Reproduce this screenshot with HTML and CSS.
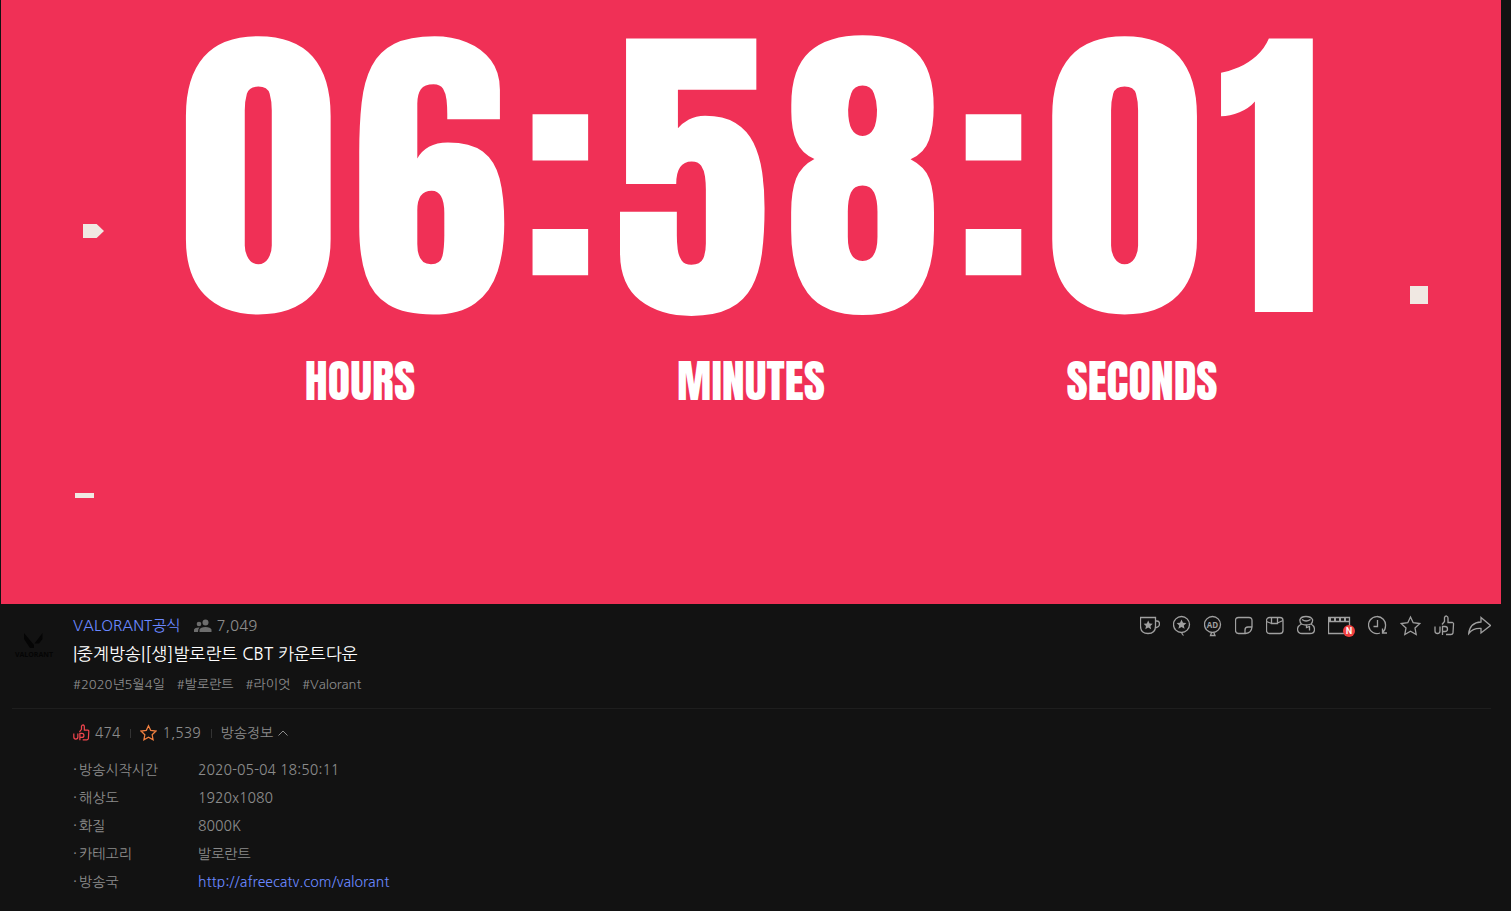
FILE: index.html
```html
<!DOCTYPE html>
<html lang="ko">
<head>
<meta charset="utf-8">
<title>VALORANT공식</title>
<link rel="stylesheet" href="styles.css">
</head>
<body>
<svg class="defs" aria-hidden="true">
  <symbol id="thumb" viewBox="0 0 21 22">
    <path d="M8 9.500L10.500 6.500V2.500Q11 1 12.500 1Q14 1.500 14 3V7.500H18.500Q20 8 19.500 9.500L19 18Q18.500 19.500 17 19.500H12"/>
    <path d="M1 11.500V16Q1 18.500 3.500 18.500T6 16V11.500M8.500 20V11.500H11Q13.500 11.500 13.500 14T11 16.500H8.500"/>
  </symbol>
  <symbol id="star" viewBox="0 0 21 22">
    <path d="M10.500 2L13.200 7.700L19.700 8.600L15 13.100L16.200 19.500L10.500 16.300L4.800 19.500L6 13.100L1.300 8.600L7.800 7.700Z"/>
  </symbol>
</svg>
<main class="page">
  <section class="stage">
    <div class="clock">
      <span>0</span><span>6</span><span>:</span><span>5</span><span>8</span><span>:</span><span>0</span><span>1</span>
    </div>
    <div class="units"><span>HOURS</span><span>MINUTES</span><span>SECONDS</span></div>
    <i class="mark mark-arrow"></i><i class="mark mark-dash"></i><i class="mark mark-square"></i>
  </section>
  <header class="channel">
    <a class="avatar" href="#" aria-label="VALORANT">
      <svg viewBox="0 0 40 30" width="40" height="30"><path d="M10 3L20 15V18H16L10 9ZM28.500 3V9L25 13.500H20.500Z"/><text x="20" y="27" text-anchor="middle">VALORANT</text></svg>
    </a>
    <div class="info">
      <div class="topline">
        <a class="name" href="#">VALORANT공식</a>
        <span class="viewers"><svg width="18" height="14" viewBox="0 0 18 14"><circle cx="11.500" cy="3.500" r="3"/><circle cx="5" cy="5" r="2.300"/><path d="M5.500 13V10.500Q6.500 8 11.500 8T17.500 10.500V13ZM0 13V10.500Q1 8.300 5.500 8.500Q4 9.500 4 13Z"/></svg>7,049</span>
        <nav class="tools">
          <button type="button" aria-label="스티커"><svg width="20" height="22"><path d="M.5 2.500H15.500V11Q15.500 18.500 8 18.500T.5 11ZM15.500 6H17Q19.500 6 19.500 9T16.500 12.500H15"/><path class="solid" d="M8.200 5.500L9.600 8.500L12.800 8.800L10.400 11L11.100 14.200L8.200 12.600L5.300 14.200L6 11L3.600 8.800L6.800 8.500Z"/></svg></button>
          <button type="button" aria-label="별풍선"><svg width="18" height="22"><circle cx="8.500" cy="9.500" r="8"/><path d="M9 17.500Q8.500 19.500 10.500 20.500"/><path class="solid" d="M8.500 4.500L10 7.800L13.400 8.100L10.800 10.400L11.600 13.800L8.500 12L5.400 13.800L6.200 10.400L3.600 8.100L7 7.800Z"/></svg></button>
          <button type="button" aria-label="애드벌룬"><svg width="18" height="22"><circle cx="8.500" cy="9.500" r="8"/><path d="M7.500 17.500L6.500 20.500H11L9.800 17.500"/><text x="8.500" y="13" text-anchor="middle">AD</text></svg></button>
          <button type="button" aria-label="포스트"><svg width="18" height="22"><path d="M17 12V5.500Q17 2.500 14 2.500H3.500Q.5 2.500 .5 5.500V15.500Q.5 18.500 3.500 18.500H10.500Q16.500 18 17 12H13Q10 12 10 15V18.500"/></svg></button>
          <button type="button" aria-label="퀵뷰"><svg width="18" height="22"><rect x=".5" y="2.500" width="16.500" height="16" rx="3"/><path d="M5.500 2.500V8.500H11.500V2.500M.5 6.500L5.500 8.500M11.500 8L17 5.500"/></svg></button>
          <button type="button" aria-label="복주머니"><svg width="18" height="22"><path d="M4.500 9Q2.500 7 3 4.500Q4 1.500 9 1.500T15.500 4.500Q16 7 14 9M5 4.500Q9 7.500 13.500 4.500M4.500 9Q.5 11 .5 14.500Q1 18.500 5 18.500H13Q17.500 18.500 17.500 14.500Q17.500 11 14 9Q9 11 4.500 9M9.500 10V12.500L12.500 11.500V15.500"/></svg></button>
          <button type="button" class="clip" aria-label="클립"><svg width="27" height="22"><path d="M.5 2.500H21.500V18.500H.5ZM.5 6.500H21.500"/><path class="dashes" d="M1 4.500H21"/></svg><b>N</b></button>
          <button type="button" aria-label="다시보기"><svg width="19" height="22"><path d="M12 18A8.500 8.500 0 1 1 17.500 11Q17.500 15 14.500 17.500M9.500 5V11.500H5.500M14.500 13.500V18H19"/></svg></button>
          <button type="button" aria-label="즐겨찾기"><svg width="21" height="22"><use href="#star"/></svg></button>
          <button type="button" aria-label="UP"><svg width="21" height="22"><use href="#thumb"/></svg></button>
          <button type="button" aria-label="공유"><svg width="23" height="22"><path d="M13 2.500L22.500 10.500L13 18V13.500Q5 13 .7 18.500Q2 7.500 13 7Z"/></svg></button>
        </nav>
      </div>
      <h1>|중계방송|[생]발로란트 CBT 카운트다운</h1>
      <div class="tags"><a href="#">#2020년5월4일</a><a href="#">#발로란트</a><a href="#">#라이엇</a><a href="#">#Valorant</a></div>
    </div>
  </header>
  <section class="details">
    <div class="stats">
      <span class="stat up"><svg width="17" height="18"><use href="#thumb"/></svg>474</span>
      <span class="stat fav"><svg width="17" height="18"><use href="#star"/></svg>1,539</span>
      <button type="button" class="toggle">방송정보 <svg width="10" height="6"><path d="M.5 5.500L5 1L9.500 5.500"/></svg></button>
    </div>
    <table>
      <tr><th scope="row"><span class="dot">·</span>방송시작시간</th><td>2020-05-04 18:50:11</td></tr>
      <tr><th scope="row"><span class="dot">·</span>해상도</th><td>1920x1080</td></tr>
      <tr><th scope="row"><span class="dot">·</span>화질</th><td>8000K</td></tr>
      <tr><th scope="row"><span class="dot">·</span>카테고리</th><td>발로란트</td></tr>
      <tr><th scope="row"><span class="dot">·</span>방송국</th><td><a href="#">http://afreecatv.com/valorant</a></td></tr>
    </table>
  </section>
</main>
</body>
</html>
```
FILE: styles.css
```css
* { box-sizing: border-box; }
body {
  margin: 0;
  min-height: 100vh;
  background: #121212;
  color: #8b8b8b;
  font: 14px/20px "NanumGothic", "Nanum Gothic", "Open Sans", "Noto Sans CJK KR", sans-serif;
}
a { color: inherit; text-decoration: none; }
button { padding: 0; border: 0; background: none; color: inherit; font: inherit; cursor: pointer; }
svg { display: block; fill: none; stroke: currentColor; }
.defs { position: absolute; width: 0; height: 0; }
.stage {
  position: relative;
  margin: 0 10px 0 1px;
  padding: 0 0 198px;
  background: #f03056;
  color: #fff;
  font-family: "Impact", "Anton", "Open Sans Condensed", "Roboto Condensed", sans-serif;
  font-weight: 400;
}
.clock {
  display: flex;
  justify-content: center;
  gap: 14px;
  font-size: 318px;
  line-height: 356px;
}
.units {
  display: grid;
  grid-template-columns: repeat(3, 391px);
  justify-content: center;
  text-align: center;
  font-size: 46px;
  line-height: 50px;
}
.mark { position: absolute; background: #f0e8e2; }
.mark-arrow { left: 82px; top: 224px; width: 21px; height: 14px; clip-path: polygon(0 0, 65% 0, 100% 50%, 65% 100%, 0 100%); }
.mark-dash { left: 74px; top: 493px; width: 19px; height: 5px; }
.mark-square { right: 73px; top: 286px; width: 18px; height: 18px; }

.channel {
  display: flex;
  gap: 19px;
  margin: 0 20px 0 12px;
  padding: 10px 0 13px;
  border-bottom: 1px solid #1e1e1e;
}
.avatar { width: 42px; padding: 16px 0 0 2px; color: #050505; }
.avatar svg { fill: currentColor; stroke: none; }
.avatar text { font: 700 7px "Open Sans", sans-serif; }
.info { flex: 1; }
.topline { display: flex; align-items: center; height: 24px; font-size: 15px; }
.name, td a { color: #6a88ff; }
.viewers { display: flex; align-items: center; gap: 4px; margin-left: 14px; }
.viewers svg { fill: #6d6d6d; stroke: none; }
.tools { display: flex; gap: 13px; margin-left: auto; color: #a0a0a0; }
.tools svg { stroke-width: 1.3; }
.tools .solid { fill: currentColor; stroke: none; }
.tools text { font: 700 8px "Open Sans", sans-serif; fill: currentColor; stroke: none; }
.dashes { stroke-width: 3; stroke-dasharray: 2 3; }
.clip { position: relative; }
.clip b {
  position: absolute;
  right: 0;
  bottom: 0;
  width: 12px;
  height: 12px;
  border-radius: 50%;
  background: #f04040;
  color: #fff;
  font-size: 9px;
  font-weight: 800;
  line-height: 12px;
}
h1 { margin: 4px 0 9px; color: #fff; font-size: 17px; font-weight: 400; line-height: 24px; }
.tags { display: flex; gap: 12px; font-size: 13px; line-height: 20px; }

.details { padding: 14px 20px 14px 73px; }
.stats { display: flex; align-items: center; height: 20px; }
.stat { display: flex; align-items: center; gap: 5px; }
.stat svg { stroke-width: 1.5; }
.stat::after { content: ""; width: 1px; height: 9px; margin: 0 9px 0 5px; background: #333; }
.up svg { color: #f0454d; }
.fav svg { color: #f08040; }
.toggle { display: flex; align-items: center; gap: 5px; }
table { margin-top: 13px; border-collapse: collapse; }
th, td { height: 28px; padding: 0; font-weight: 400; text-align: left; }
th { width: 125px; }
.dot { margin-right: 2px; }
```
